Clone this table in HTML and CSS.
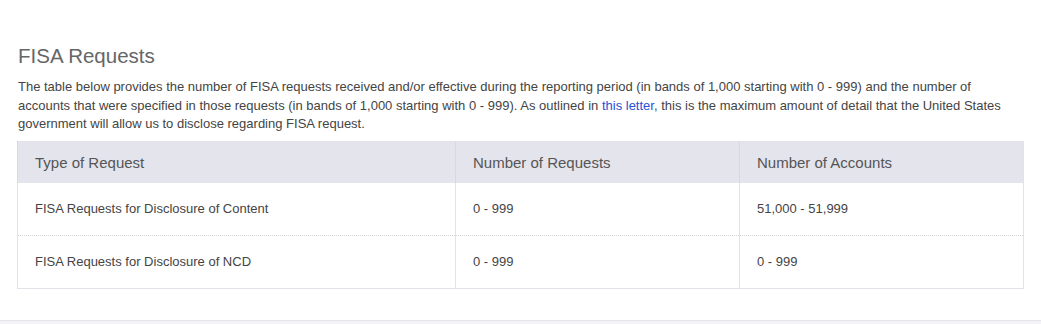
FILE: index.html
```html
<!DOCTYPE html>
<html lang="en">
  <head>
    <meta charset="UTF-8" />
    <meta name="viewport" content="width=device-width, initial-scale=1.0" />
    <title>FISA Requests</title>
    <link rel="stylesheet" href="styles.css">
  </head>
  <body>
    <section class="report">
      <h2>FISA Requests</h2>
      <p class="intro">
        The table below provides the number of FISA requests received and/or effective during the reporting period (in bands of 1,000 starting with 0 - 999) and the number of accounts that were specified in those requests (in bands of 1,000 starting with 0 - 999). As outlined in <a href="#">this letter</a>, this is the maximum amount of detail that the United States government will allow us to disclose regarding FISA request.
      </p>

      <table class="requests">
        <thead>
          <tr>
            <th class="col-type">Type of Request</th>
            <th class="col-num">Number of Requests</th>
            <th>Number of Accounts</th>
          </tr>
        </thead>
        <tbody>
          <tr>
            <td>FISA Requests for Disclosure of Content</td>
            <td>0 - 999</td>
            <td>51,000 - 51,999</td>
          </tr>
          <tr>
            <td>FISA Requests for Disclosure of NCD</td>
            <td>0 - 999</td>
            <td>0 - 999</td>
          </tr>
        </tbody>
      </table>
    </section>
    <div class="footer-strip"></div>
  </body>
</html>
```

FILE: styles.css
```css
body {
  font-family: "Liberation Sans", Arial, sans-serif;
  background-color: #fff;
  color: #444;
  margin: 0;
  padding: 0;
}

.report {
  padding: 42px 17px 31px 17px;
}

.report h2 {
  font-size: 20.5px;
  font-weight: normal;
  color: #666;
  margin: 0 0 8px 1px;
  line-height: 28px;
}

.intro {
  font-size: 13px;
  line-height: 18.5px;
  margin: 0 0 7px 1px;
  color: #444;
}

.intro a {
  color: #2b4fd6;
  text-decoration: none;
}

.requests {
  width: 100%;
  border-collapse: collapse;
  border: 1px solid #e2e2e8;
}

.requests th {
  background-color: #e4e4ec;
  font-size: 15px;
  font-weight: normal;
  color: #555;
  text-align: left;
  height: 41px;
  padding: 0 17px;
  border-left: 1px solid #d8d8e0;
}

.requests td {
  font-size: 13px;
  color: #444;
  height: 52px;
  padding: 0 17px;
  border-left: 1px solid #e2e2e8;
}

.requests tbody tr + tr td {
  border-top: 1px dotted #d4d4d8;
}

.col-type {
  width: 403px;
}

.col-num {
  width: 249px;
}

.footer-strip {
  height: 6px;
  background-color: #f4f4f7;
  border-top: 1px solid #e6e6ea;
}
```
